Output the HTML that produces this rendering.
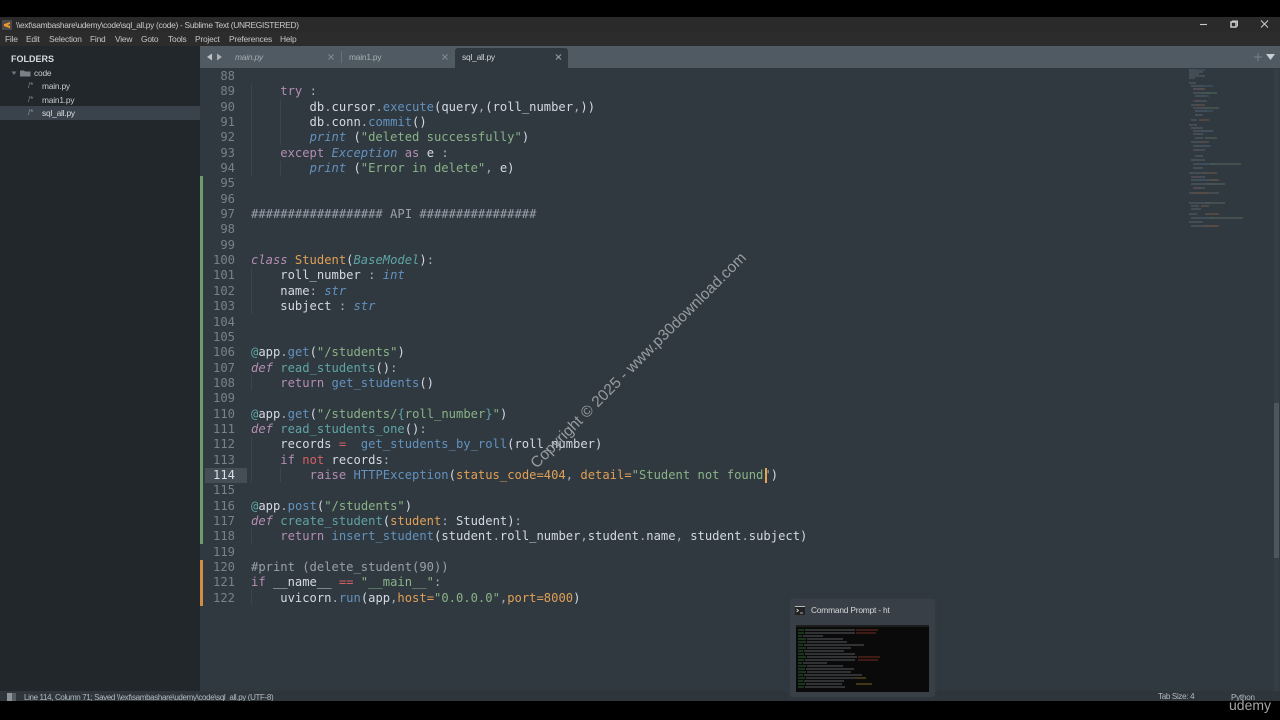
<!DOCTYPE html>
<html><head><meta charset="utf-8"><title>sql_all.py</title>
<style>
html,body{margin:0;padding:0;background:#000;width:1280px;height:720px;overflow:hidden}
*{box-sizing:border-box}
#app{position:absolute;left:0;top:0;width:1280px;height:720px;overflow:hidden;background:#000;font-family:"Liberation Sans",sans-serif;filter:blur(.35px)}
.a{position:absolute;white-space:pre}
.ui{font-size:8.4px;color:#c8cbce;line-height:12px;letter-spacing:-.2px}
#code,#nums{position:absolute;top:69px;font-family:"DejaVu Sans Mono","Liberation Mono",monospace;font-size:12.17px;line-height:15.34px;white-space:pre;margin:0}
#code{left:251px;color:#d3d9e3}
#nums{left:200px;width:35px;text-align:right;color:#78828b}
.k{color:#b48db4}.i{font-style:italic}.b{color:#6392bd}.g{color:#8ab387}.o{color:#e0a056}.r{color:#d65f62}.t{color:#5fa5a5}.c{color:#9aa0ab}.w{color:#a6acb9}
</style></head><body><div id="app">
<!-- bars -->
<div class="a" style="left:0;top:17px;width:1280px;height:15px;background:#2a2a2a"></div>
<div class="a" style="left:0;top:32px;width:1280px;height:14px;background:#2c2c2c"></div>
<div class="a" style="left:0;top:46px;width:200px;height:645px;background:#21272b"></div>
<div class="a" style="left:200px;top:46px;width:1080px;height:22px;background:#4f5a62"></div>
<div class="a" style="left:200px;top:68px;width:1080px;height:623px;background:#303840"></div>
<div class="a" style="left:0;top:691px;width:1280px;height:10px;background:#2e353b"></div>
<div class="a" style="left:0;top:701px;width:1280px;height:19px;background:#000"></div>

<!-- title -->
<svg class="a" style="left:2px;top:20px" width="10" height="10" viewBox="0 0 10 10"><rect width="10" height="10" fill="#4a4a4a"/><path d="M2 4.200L8 2V4L2 6.200ZM2 3.800L8 6V8.200L2 6Z" fill="#f09a2e"/></svg>
<div class="a" style="left:16px;top:19px;font-size:8.4px;line-height:12px;letter-spacing:-.3px;color:#c9c9c9">\\ext\sambashare\udemy\code\sql_all.py (code) - Sublime Text (UNREGISTERED)</div>
<svg class="a" style="left:1190px;top:17px" width="90" height="15" viewBox="0 0 90 15">
<path d="M10 7.500h7" stroke="#c8c8c8" stroke-width="1.100"/>
<rect x="41" y="5" width="5" height="5" fill="none" stroke="#ccc" stroke-width="1.500"/><path d="M42 4h5.500v5.500" fill="none" stroke="#ccc"/>
<path d="M71 3.500l7 7M78 3.500l-7 7" stroke="#c8c8c8" stroke-width="1.100"/></svg>
<!-- menu -->
<div class="a ui" style="left:5px;top:33px;color:#c6c6c6">File</div>
<div class="a ui" style="left:26px;top:33px;color:#c6c6c6">Edit</div>
<div class="a ui" style="left:49px;top:33px;color:#c6c6c6">Selection</div>
<div class="a ui" style="left:90px;top:33px;color:#c6c6c6">Find</div>
<div class="a ui" style="left:115px;top:33px;color:#c6c6c6">View</div>
<div class="a ui" style="left:141px;top:33px;color:#c6c6c6">Goto</div>
<div class="a ui" style="left:168px;top:33px;color:#c6c6c6">Tools</div>
<div class="a ui" style="left:195px;top:33px;color:#c6c6c6">Project</div>
<div class="a ui" style="left:229px;top:33px;color:#c6c6c6">Preferences</div>
<div class="a ui" style="left:280px;top:33px;color:#c6c6c6">Help</div>

<!-- sidebar -->
<div class="a" style="left:11px;top:53px;font-size:9px;font-weight:bold;line-height:12px;color:#d8dadc">FOLDERS</div>
<svg class="a" style="left:10px;top:69px" width="26" height="8" viewBox="0 0 26 8"><path d="M1.500 2.500h5l-2.500 3.500z" fill="#6e757b"/><path d="M10 1.500h4l1 1h5.500v5H10z" fill="#7b8086"/></svg>
<div class="a ui" style="left:34px;top:67px">code</div>
<div class="a" style="left:0;top:106px;width:200px;height:14px;background:#3a434b"></div>
<div class="a" style="left:28px;top:80px;font-size:8px;color:#828a90;line-height:12px">/*</div>
<div class="a" style="left:28px;top:94px;font-size:8px;color:#828a90;line-height:12px">/*</div>
<div class="a" style="left:28px;top:107px;font-size:8px;color:#8b9399;line-height:12px">/*</div>
<div class="a ui" style="left:42px;top:80px">main.py</div>
<div class="a ui" style="left:42px;top:94px">main1.py</div>
<div class="a ui" style="left:42px;top:107px;color:#d8dadc">sql_all.py</div>

<!-- tabs -->
<svg class="a" style="left:206px;top:53px" width="18" height="8" viewBox="0 0 18 8"><path d="M6 .5v7L1 4z" fill="#bcc2c6"/><path d="M11 .5v7l5-3.500z" fill="#aab0b5"/></svg>
<div class="a ui" style="left:235px;top:51px;font-style:italic;color:#a6adb3">main.py</div>
<div class="a ui" style="left:349px;top:51px;color:#a6adb3">main1.py</div>
<div class="a" style="left:341px;top:51px;width:1px;height:12px;background:#68727a"></div>
<div class="a" style="left:455px;top:48px;width:113px;height:20px;background:#303840;border-radius:3px 3px 0 0"></div>
<div class="a ui" style="left:462px;top:51px;color:#d0d4d8">sql_all.py</div>
<svg class="a" style="left:328px;top:54px" width="234" height="8" viewBox="0 0 234 8" stroke-width="1.200" fill="none"><path d="M0.500 .5l5 5M5.500 .5l-5 5M114.500 .5l5 5M119.500 .5l-5 5" stroke="#7d878e"/><path d="M228 .5l5 5M233 .5l-5 5" stroke="#949ba1"/></svg>
<svg class="a" style="left:1253px;top:52px" width="24" height="10" viewBox="0 0 24 10"><path d="M5 1v8M1 5h8" stroke="#78838a" stroke-width="1"/><path d="M13 2h9l-4.500 6z" fill="#c8ced2"/></svg>

<!-- gutter -->
<div class="a" style="left:205px;top:467.500px;width:42px;height:15.500px;background:#454e56"></div>
<div class="a" style="left:200px;top:176px;width:2.500px;height:368px;background:#6f9c6f"></div>
<div class="a" style="left:200px;top:560px;width:2.500px;height:46px;background:#d08d45"></div>

<!-- indent guides -->
<div class="a" style="left:251px;top:84px;width:1px;height:92px;background:#3c454d"></div>
<div class="a" style="left:280px;top:99px;width:1px;height:46px;background:#3c454d"></div>
<div class="a" style="left:280px;top:161px;width:1px;height:15px;background:#3c454d"></div>
<div class="a" style="left:251px;top:268px;width:1px;height:46px;background:#3c454d"></div>
<div class="a" style="left:251px;top:375px;width:1px;height:15px;background:#3c454d"></div>
<div class="a" style="left:251px;top:437px;width:1px;height:46px;background:#3c454d"></div>
<div class="a" style="left:280px;top:467px;width:1px;height:15px;background:#3c454d"></div>
<div class="a" style="left:251px;top:529px;width:1px;height:15px;background:#3c454d"></div>
<div class="a" style="left:251px;top:590px;width:1px;height:15px;background:#3c454d"></div>

<pre id="nums">88
89
90
91
92
93
94
95
96
97
98
99
100
101
102
103
104
105
106
107
108
109
110
111
112
113
<span style="color:#d8dee9">114</span>
115
116
117
118
119
120
121
122</pre>

<pre id="code">

    <span class="k">try</span> <span class="w">:</span>
        db<span class="w">.</span>cursor<span class="w">.</span><span class="b">execute</span>(query<span class="w">,</span>(roll_number<span class="w">,</span>))
        db<span class="w">.</span>conn<span class="w">.</span><span class="b">commit</span>()
        <span class="b i">print</span> (<span class="g">"deleted successfully"</span>)
    <span class="k">except</span> <span class="b i">Exception</span> <span class="k">as</span> e <span class="w">:</span>
        <span class="b i">print</span> (<span class="g">"Error in delete"</span><span class="w">,</span> e)


<span class="c">################## API ################</span>


<span class="k i">class</span> <span class="o">Student</span>(<span class="t i">BaseModel</span>)<span class="w">:</span>
    roll_number <span class="w">:</span> <span class="b i">int</span>
    name<span class="w">:</span> <span class="b i">str</span>
    subject <span class="w">:</span> <span class="b i">str</span>


<span class="t">@</span>app<span class="w">.</span><span class="b">get</span>(<span class="g">"/students"</span>)
<span class="k i">def</span> <span class="t">read_students</span>()<span class="w">:</span>
    <span class="k">return</span> <span class="b">get_students</span>()

<span class="t">@</span>app<span class="w">.</span><span class="b">get</span>(<span class="g">"/students/</span><span class="t">{</span><span class="g">roll_number</span><span class="t">}</span><span class="g">"</span>)
<span class="k i">def</span> <span class="t">read_students_one</span>()<span class="w">:</span>
    records <span class="r">=</span>  <span class="b">get_students_by_roll</span>(roll_number)
    <span class="k">if</span> <span class="r">not</span> records<span class="w">:</span>
        <span class="k">raise</span> <span class="b">HTTPException</span>(<span class="o">status_code=404</span><span class="w">,</span> <span class="o">detail=</span><span class="g">"Student not found"</span>)

<span class="t">@</span>app<span class="w">.</span><span class="b">post</span>(<span class="g">"/students"</span>)
<span class="k i">def</span> <span class="t">create_student</span>(<span class="o">student</span><span class="w">:</span> Student)<span class="w">:</span>
    <span class="k">return</span> <span class="b">insert_student</span>(student<span class="w">.</span>roll_number<span class="w">,</span>student<span class="w">.</span>name<span class="w">,</span> student<span class="w">.</span>subject)

<span class="c">#print (delete_student(90))</span>
<span class="k">if</span> __name__ <span class="r">==</span> <span class="g">"__main__"</span><span class="w">:</span>
    uvicorn<span class="w">.</span><span class="b">run</span>(app<span class="w">,</span><span class="o">host=</span><span class="g">"0.0.0.0"</span><span class="w">,</span><span class="o">port=8000</span>)</pre>

<div class="a" style="left:765px;top:468px;width:1.500px;height:15px;background:#e8a455"></div>

<!-- watermark -->
<div class="a" style="left:639px;top:361px;width:0;height:0"><div class="a" style="transform:translate(-50%,-50%) rotate(-45deg);font-size:15.500px;line-height:20px;color:#a9aeb2;opacity:.85;left:0;top:0">Copyright © 2025 - www.p30download.com</div></div>

<!-- minimap -->
<svg class="a" style="left:1189px;top:68px" width="56" height="166" viewBox="0 0 56 166" fill="none" stroke-width=".8" opacity=".5">
<path stroke="#9aa2ab" d="M0 2h8M0 4h14M0 6h10M0 8h16M0 10h6M0 15h7M2 18h12M4 21h10M4 25h18M6 28h10M6 33h12M2 37h9M4 40h14M6 43h12M6 47h8M2 52h6M0 57h8M2 60h12M4 63h20M4 66h10M6 70h8M2 74h12M4 78h16M6 82h10M6 88h8M2 92h14M4 96h22M4 100h10M0 105h18M2 109h14M2 112h26M2 116h22M4 120h12M0 125h30M0 135h22M2 138h8M2 141h10M0 146h8M2 150h22M0 154h14M2 158h26"/>
<path stroke="#6392bd" d="M8 2h8M10 18h14M8 28h12M10 43h14M10 63h12M12 78h10M10 96h14M8 112h18M10 150h14"/>
<path stroke="#c07f9c" d="M4 21h5M4 33h6M4 60h5M4 82h5M4 109h6M6 120h6"/>
<path stroke="#d98a4c" d="M10 21h6M8 37h8M10 52h10M12 74h8M14 105h14M4 125h16M12 138h8M16 146h14M14 158h16M20 112h10"/>
<path stroke="#8fb98c" d="M12 25h16M16 40h14M16 70h12M22 96h30M18 116h18M16 135h20M20 150h34"/>
</svg>
<div class="a" style="left:1274px;top:69px;width:5px;height:622px;background:#353d45"></div>
<div class="a" style="left:1274px;top:403px;width:5px;height:155px;background:#4d565e"></div>

<!-- taskbar preview -->
<div class="a" style="left:790px;top:599px;width:145px;height:98px;background:#383f46;border-radius:3px;box-shadow:0 0 4px 1px rgba(56,63,70,.6)"></div>
<svg class="a" style="left:795px;top:606px" width="10" height="9" viewBox="0 0 10 9"><rect width="10" height="9" fill="#222"/><path d="M0 .5h10" stroke="#bbb"/><path d="M1.500 3l2 1.500-2 1.500M5 7h3" stroke="#ddd" fill="none" stroke-width=".8"/></svg>
<div class="a ui" style="left:811px;top:604px;color:#d5d8da">Command Prompt - ht</div>
<div class="a" style="left:796px;top:625px;width:133px;height:67px;background:#0a0a0a"></div>
<svg class="a" style="left:796px;top:625px" width="133" height="67" viewBox="0 0 133 67" fill="none" stroke-width=".8" opacity=".8">
<path stroke="#4a4a4a" d="M0 1h133"/>
<path stroke="#3f9a4a" d="M2 5h6M2 8h6M2 11h4M2 14h8M2 17h8M2 20h5M2 23h8M2 26h5M2 29h6M2 32h8M2 35h6M2 38h4M2 41h8M2 44h7M2 47h8M2 50h5M2 53h7M2 56h5M2 59h7M2 62h6"/>
<path stroke="#8a8f94" d="M9 5h50M9 8h50M7 11h20M11 14h36M11 17h40M8 20h60M11 23h44M8 26h40M9 29h50M11 32h50M9 35h50M7 38h24M11 41h36M10 44h48M11 47h44M8 50h58M10 53h50M8 56h40M10 59h36M9 62h40"/>
<path stroke="#b8432f" d="M60 5h22M60 8h20M62 32h22M62 35h20"/>
<path stroke="#c99a2f" d="M60 53h10M60 59h16"/>
</svg>

<!-- status -->
<div class="a" style="left:7px;top:693px;width:9px;height:8px;background:#8d9398;border-right:4px solid #555c62"></div>
<div class="a" style="left:0;top:691px;width:1280px;height:10px;overflow:hidden">
<div class="a" style="left:24px;top:1px;font-size:8px;line-height:12px;letter-spacing:-.36px;color:#b4babf">Line 114, Column 71; Saved \\ext\sambashare\udemy\code\sql_all.py (UTF-8)</div>
<div class="a" style="left:1158px;top:0;font-size:8px;line-height:12px;letter-spacing:-.3px;color:#b4babf">Tab Size: 4</div>
<div class="a" style="left:1231px;top:1px;font-size:8px;line-height:12px;letter-spacing:-.2px;color:#b4babf">Python</div>
</div>
<div class="a" style="left:1229px;top:695px;font-size:14px;line-height:20px;color:#a5a5a5">udemy</div>
</div></body></html>
